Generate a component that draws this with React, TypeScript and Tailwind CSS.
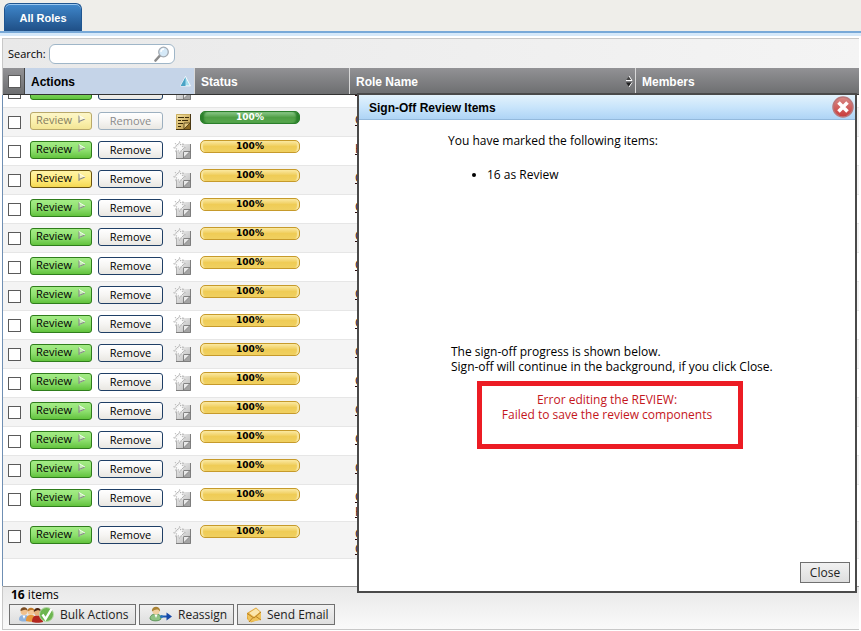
import React from "react";

type Tone = "green" | "yellow" | "faded";
type Row = { tone: Tone; links: string[] };

const rows: Row[] = [
  { tone: "green", links: ["C"] },
  { tone: "faded", links: ["C"] },
  { tone: "green", links: ["H"] },
  { tone: "yellow", links: ["C"] },
  ...Array.from({ length: 10 }, (): Row => ({ tone: "green", links: ["C"] })),
  { tone: "green", links: ["C", "H"] },
  { tone: "green", links: ["C", "C"] },
];

const reviewTone: Record<Tone, string> = {
  green: "border-[#2f7d1c] bg-linear-to-b from-[#a4ec86] via-[#8fe070] to-[#62c33c] text-black",
  yellow: "border-[#6b5510] bg-linear-to-b from-[#fff3a8] via-[#ffec80] to-[#f5d94f] text-black",
  faded: "border-[#b9a96a] bg-linear-to-b from-[#fdf6c8] via-[#fbf1b0] to-[#f3e594] text-[#857d5e]",
};

function Columns() {
  return (
    <colgroup>
      <col className="w-[21px]" />
      <col className="w-[170px]" />
      <col className="w-[155px]" />
      <col className="w-[286px]" />
      <col />
    </colgroup>
  );
}

function Tick({ label }: { label: string }) {
  return (
    <input
      type="checkbox"
      aria-label={label}
      className="block size-[13px] shrink-0 appearance-none border border-[#5a5a5a] bg-white"
    />
  );
}

function NewNoteIcon() {
  return (
    <svg width="18" height="18" viewBox="0 0 18 18" aria-hidden="true">
      <defs>
        <linearGradient id="paper" x1="0" y1="0" x2="1" y2="1">
          <stop offset="0" stopColor="#f4f4f4" />
          <stop offset="1" stopColor="#b4b4b4" />
        </linearGradient>
      </defs>
      <path d="M3 3h15v15H3z" fill="url(#paper)" />
      <path d="M17.500 3v14.500H3" fill="none" stroke="#7d7d7d" />
      <path d="M3.500 10v7" stroke="#b0b0b0" />
      <path d="M11 17l6-6v6z" fill="#a4a4a4" />
      <path d="M10.500 17v-6.500H17z" fill="#e9e9e9" />
      <path d="M10.500 17v-6.500H17M10.500 17L17 10.500" fill="none" stroke="#6c6c6c" strokeWidth=".8" />
      <path d="M6.500 .5l1.200 3.500 3-1.500-1.500 3 3.300 1.200-3.300 1.200 1.500 3-3-1.500-1.200 3.300-1.200-3.300-3 1.500 1.500-3L.5 6.700l3.300-1.200-1.500-3 3 1.500z" fill="#fafafa" stroke="#aaa" strokeWidth=".9" strokeDasharray="1.500 1" />
    </svg>
  );
}

function FilledNoteIcon() {
  return (
    <svg width="18" height="18" viewBox="0 0 18 18" aria-hidden="true">
      <defs>
        <linearGradient id="gold" x1="0" y1="0" x2="1" y2="1">
          <stop offset="0" stopColor="#fae8a8" />
          <stop offset="1" stopColor="#b08a38" />
        </linearGradient>
      </defs>
      <path d="M3 2h15v16H3z" fill="url(#gold)" />
      <path d="M17.500 2v15.500H3" fill="none" stroke="#4a3712" />
      <path d="M3.500 17V2.500H17" fill="none" stroke="#c9ae62" />
      <path d="M5 5.500h6M12 5.500h4M5 8.500h3M9 8.500h6M5 11.500h5M5 14.500h3" stroke="#3a2a08" />
      <path d="M11 17l6-6v6z" fill="#8c6a24" />
      <path d="M11 17v-6h6z" fill="#e6ca80" stroke="#4a3712" strokeWidth=".8" />
    </svg>
  );
}

function ReviewButton({ tone }: { tone: Tone }) {
  return (
    <button
      type="button"
      disabled={tone === "faded"}
      className={`flex h-[18px] w-[62px] items-start justify-between rounded-[3px] border px-[5px] text-[11px] leading-[14px] ${reviewTone[tone]}`}
    >
      Review
      <svg width="8" height="9" viewBox="0 0 8 9" className="mt-[2px]" aria-hidden="true">
        <path d="M1 .5v7l6-3.500z" fill="#fff" fillOpacity=".45" />
        <path d="M1 .5v7.500M1 6.500L7 4" fill="none" stroke="#8a8a8a" strokeWidth="1.100" />
        <path d="M1 .5L7 4" stroke="#fff" strokeOpacity=".8" />
      </svg>
    </button>
  );
}

function RemoveButton({ faded }: { faded: boolean }) {
  return (
    <button
      type="button"
      disabled={faded}
      className={`flex h-[18px] w-[65px] items-center justify-center rounded-[3px] border bg-linear-to-b from-white via-[#f6f5f3] to-[#e9e7e2] text-[11px] leading-[16px] ${
        faded ? "border-[#9db0c0] text-[#8a8a8a]" : "border-[#1f3f66] text-black"
      }`}
    >
      Remove
    </button>
  );
}

function StatusBar({ done }: { done: boolean }) {
  return (
    <div
      className={`flex h-[13px] w-[100px] items-center justify-center rounded-[5px] border font-['DejaVu_Sans',sans-serif] text-[9px] leading-[11px] font-bold ${
        done
          ? "border-[#2b7f2b] bg-linear-to-b from-[#8cc98a] via-[#4f9e45] to-[#57a84d] text-white"
          : "border-[#c69a2b] bg-linear-to-b from-[#fbe9a0] via-[#efcc56] to-[#f0d060] text-black"
      } ${done ? "shadow-[inset_4px_0_2px_-1px_#2b7f2b,inset_-4px_0_2px_-1px_#2b7f2b]" : "shadow-[inset_3px_0_1px_-1px_#f8e6a0,inset_-3px_0_1px_-1px_#f8e6a0]"}`}
    >
      100%
    </div>
  );
}

function TableRow({ row, index }: { row: Row; index: number }) {
  return (
    <tr
      className={`border-b border-[#e6e6e6] align-top ${row.links.length > 1 ? "h-[37px]" : "h-[29px]"} ${
        index % 2 ? "bg-[#f4f4f4]" : "bg-white"
      }`}
    >
      <td className="pt-[8px] pl-[5px]">
        <Tick label={`Select item ${index + 1}`} />
      </td>
      <td className="pt-[4px] pl-[6px]">
        <div className="flex">
          <ReviewButton tone={row.tone} />
          <div className="ml-[6px]">
            <RemoveButton faded={row.tone === "faded"} />
          </div>
          <div className="ml-[10px]">{row.tone === "faded" ? <FilledNoteIcon /> : <NewNoteIcon />}</div>
        </div>
      </td>
      <td className="pt-[3px] pl-[6px]">
        <StatusBar done={row.tone === "faded"} />
      </td>
      <td className="pt-[4px] pl-[6px] leading-[15px]">
        {row.links.map((text, i) => (
          <a key={i} href="#role" className="block w-fit text-[#2a0c0c] underline">
            {text}
          </a>
        ))}
      </td>
      <td />
    </tr>
  );
}

function PeopleIcon() {
  return (
    <svg width="35" height="17" viewBox="0 0 35 17" aria-hidden="true">
      <path d="M0 14c0-4 2-5 5-5s5 1 5 5c-2 2-8 2-10 0z" fill="#8fb2dc" />
      <path d="M3.500 9.500L5 13l1.500-3.500z" fill="#fff" />
      <circle cx="5" cy="5.500" r="3.400" fill="#f0c08c" />
      <path d="M1.500 5C1 0 9 0 8.500 5 7 2.500 4 4 1.500 5z" fill="#7a4c22" />
      <path d="M7 15c0-5 2-6 5-6s5 1 5 6c-2 1-8 1-10 0z" fill="#e6963a" />
      <circle cx="12" cy="5.500" r="3.400" fill="#f3c898" />
      <path d="M8.500 5.500C8 .5 16 .5 15.500 5.500 14 3 11 4 8.500 5.500z" fill="#c07a28" />
      <path d="M13 16c0-5 2-6.500 5.500-6.500S24 11 24 16c-2 1-9 1-11 0z" fill="#b3261e" />
      <circle cx="18.500" cy="6" r="3.500" fill="#e7b27c" />
      <path d="M14.800 6C14.500 .5 22.500 .5 22 6c-1.500-2.500-4-2-7.200 0z" fill="#4a2512" />
      <circle cx="27.500" cy="8.500" r="7" fill="#6db550" stroke="#b9d9ab" />
      <path d="M23.500 8.500l3 4.500L32.500 3" fill="none" stroke="#fff" strokeWidth="2.400" />
    </svg>
  );
}

function ReassignIcon() {
  return (
    <svg width="24" height="17" viewBox="0 0 24 17" aria-hidden="true">
      <path d="M1 13c0-4 3-5 6-5s5 1 5 5c-2 2.500-9 2.500-11 0z" fill="#8fc283" stroke="#3f7d3c" strokeWidth=".7" />
      <path d="M5.500 8.500L7 12l1.500-3.500z" fill="#fff" />
      <circle cx="7" cy="5" r="3.500" fill="#f1cfa0" />
      <path d="M3 5.500C2-1 12-1 11 5.500 9.500 2.500 6 3 3 5.500z" fill="#a98234" />
      <path d="M12 10.500h7" stroke="#1d57b5" strokeWidth="2" />
      <circle cx="12.500" cy="10.500" r="1.600" fill="#2a78b8" />
      <path d="M17.500 6.500l5.500 4-5.500 4z" fill="#1548a8" />
    </svg>
  );
}

function MailIcon() {
  return (
    <svg width="15" height="16" viewBox="0 0 15 16" aria-hidden="true">
      <path d="M0 6l9-5.500L14 5v7L4 15.500 0 12z" fill="#e0a63a" />
      <path d="M2 6l7-4.500L13 5 7 10z" fill="#fbe7ae" />
      <path d="M0 6.500l7 3L14 5v8L2 15z" fill="#f0c35a" />
      <path d="M0 6.500l7 4.500 7-6M2 15l4-4.500M14 13l-5-3.500" fill="none" stroke="#b27b1e" strokeWidth=".9" />
    </svg>
  );
}

function ToolButton({ children, className }: { children: React.ReactNode; className: string }) {
  return (
    <button
      type="button"
      className={`flex h-[21px] items-center border border-[#707070] bg-linear-to-b from-[#f1f1f1] to-[#dedede] leading-[16px] text-[#222] ${className}`}
    >
      {children}
    </button>
  );
}

function ReviewDialog() {
  return (
    <div
      role="dialog"
      aria-label="Sign-Off Review Items"
      className="absolute top-[93px] right-[4px] flex h-[500px] w-[500px] flex-col border-2 border-[#4a4a4a] bg-white"
    >
      <div className="flex h-[25px] shrink-0 items-center justify-between border-b border-[#93b9dc] bg-linear-to-b from-[#e3f2fc] via-[#c9e5fb] to-[#aed4f5] pr-px pl-[10px]">
        <h2 className="pt-px font-['Liberation_Sans',Arial,sans-serif] text-[12px] leading-[16px] font-bold">
          Sign-Off Review Items
        </h2>
        <button type="button" aria-label="Dismiss">
          <svg width="22" height="22" viewBox="0 0 22 22" className="block" aria-hidden="true">
            <defs>
              <linearGradient id="cross" x1="0" y1="0" x2="0" y2="1">
                <stop offset="0" stopColor="#d88b88" />
                <stop offset="1" stopColor="#c93a3a" />
              </linearGradient>
            </defs>
            <circle cx="11" cy="11" r="10" fill="url(#cross)" stroke="#b9777a" strokeWidth="1.500" />
            <path d="M6.500 6.500l9 9M15.500 6.500l-9 9" stroke="#fff" strokeWidth="3.600" />
          </svg>
        </button>
      </div>
      <div className="flex grow flex-col pb-[8px]">
        <p className="mt-[13px] pl-[89px] leading-[15px]">You have marked the following items:</p>
        <ul className="mt-[19px] list-disc pl-[128px] leading-[15px]">
          <li>16 as Review</li>
        </ul>
        <p className="mt-[162px] pl-[92px] leading-[15px]">
          The sign-off progress is shown below.
          <br />
          Sign-off will continue in the background, if you click Close.
        </p>
        <div className="mt-[7px] ml-[118px] h-[68px] w-[266px] border-5 border-[#ec1c24] pt-[6px] pr-[6px] text-center leading-[15px] text-[#c4161c]">
          Error editing the REVIEW:
          <br />
          Failed to save the review components
        </div>
        <div className="mt-auto flex justify-end pr-[5px]">
          <ToolButton className="w-[50px] justify-center">Close</ToolButton>
        </div>
      </div>
    </div>
  );
}

const headText = "border-l border-[#d8d8d8] pt-px pl-[6px] text-left font-bold";

export default function App() {
  return (
    <div className="relative flex h-screen flex-col overflow-hidden bg-white pb-px font-['Open_Sans','Noto_Sans',sans-serif] text-[12px] leading-[16px] text-black">
      <nav className="flex h-[36px] shrink-0 flex-col border-b-3 border-[#d6e9fa] bg-[#efeeea]">
        <div className="flex grow items-end border-b-2 border-[#78a9d8] pl-[4px]">
          <a
            href="#roles"
            className="flex h-[28px] w-[78px] items-center justify-center rounded-t-[6px] border border-b-0 border-[#1f5590] bg-linear-to-b from-[#4088cc] to-[#1f4f86] font-['Liberation_Sans',Arial,sans-serif] text-[11px] font-bold text-white shadow-[inset_0_1px_0_#9cc8f0]"
          >
            All Roles
          </a>
        </div>
      </nav>
      <main className="mx-[2px] mt-[2px] flex min-h-0 grow flex-col border border-r-0 border-[#c8c8c8]">
        <div className="flex h-[29px] shrink-0 items-center bg-linear-to-r from-[#e9e9e9] to-[#f4f4f4] pl-[5px]">
          <label htmlFor="search" className="text-[11px]">Search:</label>
          <div className="ml-[3px] flex h-[20px] w-[126px] items-center rounded-[6px] border border-[#9fb6c8] bg-white pr-[4px] pl-[4px]">
            <input id="search" type="text" className="min-w-0 grow outline-none" />
            <svg width="16" height="16" viewBox="0 0 16 16" className="shrink-0" aria-hidden="true">
              <path d="M1.500 14.500L6 9.500" stroke="#8c8c8c" strokeWidth="2.600" strokeLinecap="round" />
              <circle cx="9.500" cy="6" r="4.800" fill="#d5e9f8" stroke="#a3aab2" strokeWidth="1.300" />
              <path d="M7 6a3 3 0 0 1 3-3" fill="none" stroke="#fff" strokeWidth="1.300" />
            </svg>
          </div>
        </div>
        <table className="w-full shrink-0 table-fixed border-separate border-spacing-0 border-b border-[#333] font-['Liberation_Sans',Arial,sans-serif] text-[12px]">
          <Columns />
          <thead>
            <tr className="h-[26px] bg-linear-to-b from-[#929295] to-[#6d6e70] text-white">
              <th className="pt-px pl-[5px]">
                <Tick label="Select all items" />
              </th>
              <th className="border-l border-[#444] bg-[#c5d4e8] bg-none pt-px pr-[3px] pl-[6px] text-left font-bold text-black">
                <div className="flex items-center justify-between">
                  Actions
                  <svg width="11" height="11" viewBox="0 0 10 10" aria-hidden="true">
                    <path d="M5 .5L.5 9h9z" fill="#a6deee" stroke="#fff" strokeWidth=".8" />
                    <path d="M5 1L.5 9H5z" fill="#4aa3c6" />
                  </svg>
                </div>
              </th>
              <th className={headText}>Status</th>
              <th className={`${headText} pr-[2px]`}>
                <div className="flex items-center justify-between">
                  Role Name
                  <svg width="8" height="13" viewBox="0 0 8 13" aria-hidden="true">
                    <path d="M4 1L1 5.500h6z" fill="#444" />
                    <path d="M4 1l3 4.500H1" fill="none" stroke="#fff" />
                    <path d="M4 12L1 7.500h6z" fill="#222" />
                    <path d="M4 12l3-4.500" fill="none" stroke="#fff" />
                  </svg>
                </div>
              </th>
              <th className={headText}>Members</th>
            </tr>
          </thead>
        </table>
        <div className="-ml-px min-h-0 grow overflow-hidden border-l border-[#6f8fb3] bg-white">
          <table className="-mt-[17px] w-full table-fixed">
            <Columns />
            <tbody>
              {rows.map((row, i) => (
                <TableRow key={i} row={row} index={i} />
              ))}
            </tbody>
          </table>
        </div>
        <footer className="flex h-[43px] shrink-0 flex-col justify-between border-t border-[#999] bg-linear-to-b from-[#e8e8e8] to-[#fafafa] pb-[4px] pl-[6px]">
          <p className="pl-[2px]">
            <b>16</b> items
          </p>
          <div className="flex gap-[3px]">
            <ToolButton className="w-[127px] gap-[6px] pl-[9px]">
              <PeopleIcon />
              Bulk Actions
            </ToolButton>
            <ToolButton className="w-[95px] gap-[5px] pl-[9px]">
              <ReassignIcon />
              Reassign
            </ToolButton>
            <ToolButton className="w-[98px] gap-[5px] pl-[9px]">
              <MailIcon />
              Send Email
            </ToolButton>
          </div>
        </footer>
      </main>
      <ReviewDialog />
    </div>
  );
}
